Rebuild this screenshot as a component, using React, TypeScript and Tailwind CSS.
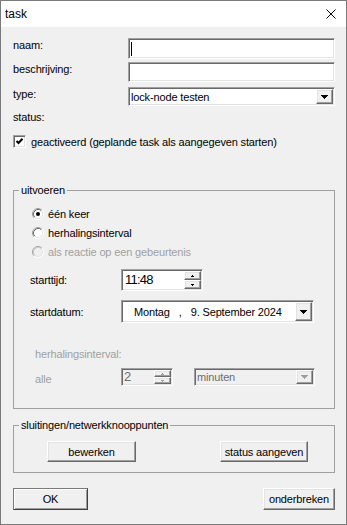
import type React from "react";

const sunken =
  "border border-t-[#a0a0a0] border-l-[#a0a0a0] border-b-white border-r-white shadow-[inset_1px_1px_0_#696969,inset_-1px_-1px_0_#e3e3e3]";
const raised =
  "border border-t-white border-l-white border-b-[#696969] border-r-[#696969] bg-[#f0f0f0] shadow-[inset_-1px_-1px_0_#a0a0a0,inset_1px_1px_0_#e3e3e3]";

const Arrow: React.FC<{ color?: string }> = ({ color = "#000" }) => (
  <svg width="7" height="4" viewBox="0 0 7 4" shapeRendering="crispEdges">
    <path d="M0 0h7v1H0zM1 1h5v1H1zM2 2h3v1H2zM3 3h1v1H3z" fill={color} />
  </svg>
);

const DropButton: React.FC<{ disabled?: boolean }> = ({ disabled }) => (
  <div className={`flex w-[17px] shrink-0 items-center justify-center ${raised}`}>
    <Arrow color={disabled ? "#a0a0a0" : "#000"} />
  </div>
);

const Spin: React.FC<{ disabled?: boolean }> = ({ disabled }) => {
  const c = disabled ? "#a0a0a0" : "#000";
  return (
    <div className="flex w-[17px] shrink-0 flex-col">
      <div className={`flex flex-1 items-center justify-center ${raised}`}>
        <svg width="3" height="2" viewBox="0 0 3 2" shapeRendering="crispEdges">
          <path d="M1 0h1v1H1zM0 1h3v1H0z" fill={c} />
        </svg>
      </div>
      <div className={`flex flex-1 items-center justify-center ${raised}`}>
        <svg width="3" height="2" viewBox="0 0 3 2" shapeRendering="crispEdges">
          <path d="M0 0h3v1H0zM1 1h1v1H1z" fill={c} />
        </svg>
      </div>
    </div>
  );
};

const Radio: React.FC<{ checked?: boolean; disabled?: boolean }> = ({ checked, disabled }) => (
  <svg width="12" height="12" viewBox="0 0 12 12" className="shrink-0">
    <circle cx="6" cy="6" r="4.5" fill={disabled ? "#f0f0f0" : "#fff"} />
    <path d="M9.89 2.11A5.5 5.5 0 0 0 2.11 9.89" fill="none" stroke="#a0a0a0" />
    <path d="M9.18 2.82A4.5 4.5 0 0 0 2.82 9.18" fill="none" stroke={disabled ? "#c8c8c8" : "#696969"} />
    <path d="M9.89 2.11A5.5 5.5 0 0 1 2.11 9.89" fill="none" stroke="#fff" />
    <path d="M9.18 2.82A4.5 4.5 0 0 1 2.82 9.18" fill="none" stroke="#e3e3e3" />
    {checked && <circle cx="6" cy="6" r="2" fill="#000" />}
  </svg>
);

export default function App() {
  return (
    <div className="flex h-[525px] w-[347px] flex-col border border-[#7a7a7a] bg-[#f0f0f0] font-['Liberation_Sans',Arial,sans-serif] text-[11px] leading-[14px] tracking-[-0.15px] text-black">
      <header className="flex h-[26px] shrink-0 items-center justify-between bg-white pl-[4px] pr-[10px]">
        <span className="text-[12px] tracking-normal">task</span>
        <svg width="10" height="10" viewBox="0 0 10 10">
          <path d="M0.5 0.5l9 9M9.5 0.5l-9 9" stroke="#000" strokeWidth="1" />
        </svg>
      </header>

      <main className="flex flex-1 flex-col pl-[12px] pr-[11px]">
        <div className="mt-[11px] flex">
          <span className="w-[115px]">naam:</span>
          <div className={`flex h-[21px] w-[207px] items-center bg-white p-px ${sunken}`}>
            <span className="ml-px h-[14px] w-px bg-black" />
          </div>
        </div>
        <div className="mt-[3px] flex">
          <span className="w-[115px]">beschrijving:</span>
          <div className={`h-[20px] w-[207px] bg-white p-px ${sunken}`} />
        </div>
        <div className="mt-[5px] flex">
          <span className="w-[115px]">type:</span>
          <div className={`flex h-[19px] w-[207px] bg-white p-px ${sunken}`}>
            <span className="flex flex-1 items-center pl-px">lock-node testen</span>
            <DropButton />
          </div>
        </div>
        <div className="mt-[4px]">status:</div>
        <div className="mt-[11px] flex h-[13px] items-center">
          <div className={`flex h-[13px] w-[13px] items-center justify-center bg-white p-px ${sunken}`}>
            <svg width="9" height="9" viewBox="0 0 9 9">
              <path d="M1.5 4l2 2 4-4.2" fill="none" stroke="#000" strokeWidth="2" />
            </svg>
          </div>
          <span className="ml-[5px]">geactiveerd (geplande task als aangegeven starten)</span>
        </div>

        <fieldset className="mt-[35px] border border-[#a0a0a0]">
          <legend className="ml-[5px] px-[2px]">uitvoeren</legend>
          <div className="flex flex-col pb-[22px] pl-[16px] pt-[7px]">
            <div className="flex h-[19px] items-center pl-[2px]">
              <Radio checked />
              <span className="ml-[4px]">één keer</span>
            </div>
            <div className="flex h-[19px] items-center pl-[2px]">
              <Radio />
              <span className="ml-[4px]">herhalingsinterval</span>
            </div>
            <div className="flex h-[19px] items-center pl-[2px] text-[#a0a0a0]">
              <Radio disabled />
              <span className="ml-[4px]">als reactie op een gebeurtenis</span>
            </div>

            <div className="mt-[8px] flex h-[22px] items-center">
              <span className="w-[91px]">starttijd:</span>
              <div className={`flex h-full w-[82px] bg-white p-px ${sunken}`}>
                <span className="flex flex-1 items-center pl-[2px] text-[13px] tracking-[-0.8px]">11:48</span>
                <Spin />
              </div>
            </div>
            <div className="mt-[9px] flex h-[23px] items-center">
              <span className="w-[91px]">startdatum:</span>
              <div className={`flex h-full w-[193px] bg-white p-px ${sunken}`}>
                <div className="flex flex-1 items-center pl-[11px]">
                  <span>Montag</span>
                  <span className="ml-[9px]">,</span>
                  <span className="ml-[9px]">9. September 2024</span>
                </div>
                <DropButton />
              </div>
            </div>

            <div className="mt-[24px] pl-[5px] text-[#a0a0a0]">herhalingsinterval:</div>
            <div className="mt-[7px] flex h-[18px] items-center">
              <span className="w-[91px] pl-[5px] pt-[3px] text-[#a0a0a0]">alle</span>
              <div className={`flex h-full w-[52px] p-px ${sunken}`}>
                <span className="flex flex-1 items-center pl-px text-[13px] text-[#6d6d6d]">2</span>
                <Spin disabled />
              </div>
              <div className={`ml-[21px] flex h-full w-[121px] p-px ${sunken}`}>
                <span className="flex flex-1 items-center pl-px text-[#6d6d6d]">minuten</span>
                <DropButton disabled />
              </div>
            </div>
          </div>
        </fieldset>

        <fieldset className="mt-[9px] border border-[#a0a0a0]">
          <legend className="ml-[5px] px-[2px]">sluitingen/netwerkknooppunten</legend>
          <div className="flex pb-[10px] pl-[33px] pt-[9px]">
            <button className={`h-[21px] w-[89px] ${raised}`}>bewerken</button>
            <button className={`ml-[84px] h-[21px] w-[88px] ${raised}`}>status aangeven</button>
          </div>
        </fieldset>

        <div className="mt-[15px] flex justify-between">
          <button className="h-[22px] w-[75px] border border-[#7a7a7a] border-b-[#404040] border-r-[#404040] bg-[#f0f0f0] shadow-[inset_1px_1px_0_white,inset_-1px_-1px_0_#a0a0a0]">
            OK
          </button>
          <button className={`h-[22px] w-[72px] ${raised}`}>onderbreken</button>
        </div>
      </main>
    </div>
  );
}
